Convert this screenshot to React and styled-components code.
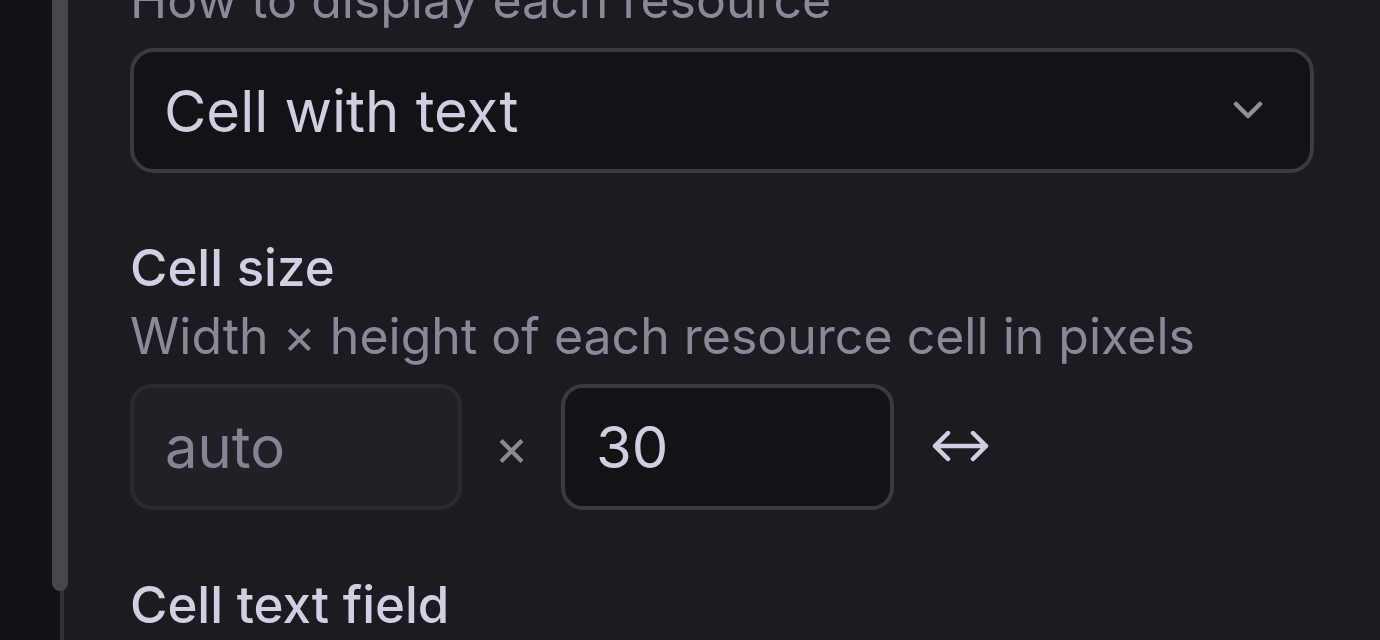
import styled, { createGlobalStyle } from "styled-components"

const GlobalStyle = createGlobalStyle`
    html, body {
        margin: 0;
        padding: 0;
        height: 100%;
        overflow: hidden;
        background: #1a1c21;
    }
    #root {
        height: 100%;
    }
`;

const Page = styled.div`
    display: flex;
    height: 640px;
    overflow: hidden;
    font-family: Inter, "Noto Sans", sans-serif;
`;

const Sidebar = styled.div`
    position: relative;
    width: 60px;
    flex-shrink: 0;
    background: #111215;
    border-right: 4px solid #2f3136;
`;

const Thumb = styled.div`
    position: absolute;
    top: -40px;
    left: 52px;
    width: 16px;
    height: 631px;
    border-radius: 0 0 8px 8px;
    background: #47484e;
`;

const Panel = styled.div`
    flex: 1;
    background: #1a1c21;
    padding: 0 66px;
`;

const Form = styled.div`
    display: flex;
    flex-direction: column;
    gap: 61px;
    margin-top: -102px;
`;

const Field = styled.div`
    display: flex;
    flex-direction: column;
`;

const Label = styled.div`
    font-size: 51px;
    line-height: 68px;
    color: #d1d0e3;
    font-weight: 500;
`;

const Hint = styled.div`
    font-size: 50px;
    line-height: 68px;
    color: #8a8a96;
    margin-bottom: 14px;
`;

const Select = styled.div`
    display: flex;
    align-items: center;
    justify-content: space-between;
    box-sizing: border-box;
    height: 125px;
    padding: 0 47px 0 30px;
    background: #121317;
    border: 4px solid #3a3b41;
    border-radius: 24px;
    font-size: 58px;
    color: #d0cfe2;
`;

const SizeRow = styled.div`
    display: flex;
    align-items: center;
`;

const NumberBox = styled.div`
    display: flex;
    align-items: center;
    box-sizing: border-box;
    width: ${({ $w }) => $w}px;
    height: 126px;
    padding: 0 31px;
    border-radius: 22px;
    border: 4px solid ${({ $disabled }) => ($disabled ? "#2a2b30" : "#3a3b41")};
    background: ${({ $disabled }) => ($disabled ? "#202126" : "#121317")};
    color: ${({ $disabled }) => ($disabled ? "#858592" : "#d0cfe2")};
    font-size: 58px;
`;

const Times = styled.span`
    width: 99px;
    text-align: center;
    font-size: 52px;
    color: #8a8a92;
`;

const LinkButton = styled.div`
    display: flex;
    align-items: center;
    margin-left: 37px;
    color: #d0cfe2;
`;

const Chevron = () => (
    <svg width="30" height="20" viewBox="0 0 30 20">
        <path d="M3 3 L15 15 L27 3" fill="none" stroke="#8e8e9c" strokeWidth="4.5" strokeLinecap="round" strokeLinejoin="round" />
    </svg>
);

const BothArrow = () => (
    <svg width="60" height="32" viewBox="0 0 60 32">
        <path
            d="M4 15 H55 M17 2 L4 15 L17 28 M42 2 L55 15 L42 28"
            fill="none"
            stroke="currentColor"
            strokeWidth="4.5"
            strokeLinecap="round"
            strokeLinejoin="round"
        />
    </svg>
);

const App = () => {
    return (
        <>
            <GlobalStyle />
            <Page>
                <Sidebar>
                    <Thumb />
                </Sidebar>
                <Panel>
                    <Form>
                        <Field>
                            <Label>Display mode</Label>
                            <Hint>How to display each resource</Hint>
                            <Select>
                                <span>Cell with text</span>
                                <Chevron />
                            </Select>
                        </Field>
                        <Field>
                            <Label>Cell size</Label>
                            <Hint>Width × height of each resource cell in pixels</Hint>
                            <SizeRow>
                                <NumberBox $w={332} $disabled>auto</NumberBox>
                                <Times>×</Times>
                                <NumberBox $w={333}>30</NumberBox>
                                <LinkButton>
                                    <BothArrow />
                                </LinkButton>
                            </SizeRow>
                        </Field>
                        <Field>
                            <Label>Cell text field</Label>
                        </Field>
                    </Form>
                </Panel>
            </Page>
        </>
    )
}

export default App
